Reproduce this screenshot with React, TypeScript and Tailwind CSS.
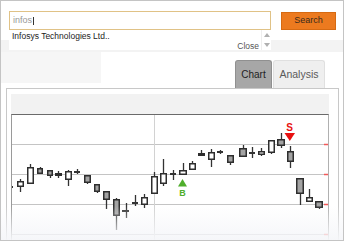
import React from "react";

// candle: x0, x1, bodyTop, bodyBottom, wickTop, wickBottom, kind
type Candle = [number, number, number, number, number, number, "w" | "g" | "d"];

const candles: Candle[] = [
  [7, 13, 186, 188, 181, 190, "d"],
  [17, 23, 181, 186, 179, 192, "w"],
  [27, 33, 167, 183, 164, 183, "w"],
  [37, 42, 168, 173, 167, 173, "g"],
  [47, 52, 170, 175, 170, 178, "g"],
  [55, 61, 173, 175, 171, 178, "g"],
  [65, 71, 171, 179, 170, 186, "w"],
  [74, 80, 171, 173, 169, 174, "d"],
  [84, 90, 175, 182, 175, 184, "g"],
  [94, 99, 184, 191, 184, 193, "g"],
  [103, 109, 191, 199, 191, 209, "g"],
  [113, 119, 199, 215, 198, 230, "g"],
  [122, 129, 210, 211, 203, 218, "d"],
  [132, 138, 202, 203, 195, 206, "d"],
  [141, 147, 197, 204, 194, 208, "w"],
  [151, 157, 176, 193, 172, 193, "w"],
  [160, 166, 173, 183, 159, 186, "w"],
  [170, 176, 173, 174, 170, 180, "d"],
  [179, 186, 170, 174, 163, 174, "w"],
  [189, 195, 163, 169, 161, 170, "w"],
  [198, 204, 153, 155, 150, 156, "g"],
  [208, 214, 152, 159, 149, 167, "w"],
  [217, 223, 151, 153, 150, 154, "d"],
  [227, 233, 155, 162, 155, 165, "g"],
  [239, 246, 148, 156, 145, 157, "g"],
  [249, 255, 152, 153, 147, 158, "d"],
  [258, 264, 151, 154, 148, 156, "w"],
  [268, 274, 140, 152, 140, 154, "w"],
  [277, 284, 139, 145, 133, 148, "g"],
  [287, 293, 151, 161, 146, 168, "g"],
  [296, 303, 178, 193, 178, 205, "g"],
  [306, 312, 197, 201, 189, 202, "w"],
  [315, 322, 201, 207, 201, 209, "g"],
];

const gridRows = [144, 174, 204, 234];

function CandleChart() {
  return (
    <svg width="316" height="126" className="block">
      <g transform="translate(-12,-115)">
        {gridRows.map((y) => (
          <line key={y} x1={12} x2={328} y1={y + 0.5} y2={y + 0.5} stroke="#c4c4c4" strokeWidth={1} />
        ))}
        <line x1={154.5} x2={154.5} y1={115} y2={241} stroke="#d2d2d2" strokeWidth={1} />
        {gridRows.map((y) => (
          <line key={"t" + y} x1={324} x2={328} y1={y + 0.5} y2={y + 0.5} stroke="#f25a5a" strokeWidth={1.5} />
        ))}
        {candles.map(([x0, x1, bt, bb, wt, wb, kind], i) => {
          const cx = Math.round((x0 + x1) / 2) + 0.5;
          const dark = kind === "d";
          return (
            <g key={i}>
              <line x1={cx} x2={cx} y1={wt} y2={wb} stroke="#333" strokeWidth={1.3} />
              {dark ? (
                <rect x={x0} y={bt} width={x1 - x0} height={Math.max(bb - bt, 2)} fill="#333" />
              ) : (
                <rect
                  x={x0 + 0.75}
                  y={bt + 0.75}
                  width={x1 - x0 - 0.5}
                  height={Math.max(bb - bt - 0.5, 1.5)}
                  fill={kind === "w" ? "#fff" : "#a3a3a3"}
                  stroke="#2e2e2e"
                  strokeWidth={1.5}
                />
              )}
            </g>
          );
        })}
        {/* buy marker */}
        <polygon points="178,186.5 187,186.5 182.5,179" fill="#4fae2c" />
        <text x={182.5} y={196} textAnchor="middle" fontSize="9" fontWeight="bold" fill="#4fae2c" fontFamily="Liberation Sans, sans-serif">
          B
        </text>
        {/* sell marker */}
        <text x={289.5} y={131} textAnchor="middle" fontSize="10" fontWeight="bold" fill="#e81010" fontFamily="Liberation Sans, sans-serif">
          S
        </text>
        <polygon points="284.5,133 295,133 289.8,141" fill="#e81010" />
      </g>
    </svg>
  );
}

function ScrollArrows() {
  return (
    <div className="flex flex-col items-center justify-between w-[10px] h-full py-[3px] border-l border-[#eee]">
      <svg width="6" height="4">
        <polygon points="0,4 6,4 3,0" fill="#b0b0b0" />
      </svg>
      <svg width="6" height="4">
        <polygon points="0,0 6,0 3,4" fill="#b0b0b0" />
      </svg>
    </div>
  );
}

export default function App() {
  return (
    <div className="relative w-[344px] h-[241px] overflow-hidden bg-white border border-[#c4c4c4] font-['Liberation_Sans',Arial,sans-serif] flex flex-col">
      {/* search row */}
      <div className="flex items-start pl-[8px] pt-[10px] h-[39px] shrink-0">
        <div className="w-[262px] h-[19px] border border-[#e0c286] flex items-center pl-[3px] text-[9px] text-[#999]">
          <span>infos</span>
          <span className="ml-[1px] w-px h-[8px] bg-[#333]" />
        </div>
        <button className="ml-[10px] mt-px w-[55px] h-[18px] bg-[#ec7a1f] border border-[#d66a12] text-[9px] text-[#3a2a1c] flex items-center justify-center">
          Search
        </button>
      </div>

      <div className="h-[12px] bg-[#f3f3f3] shrink-0" />

      {/* tabs row */}
      <div className="flex h-[36px] shrink-0">
        <div className="w-[100px] h-[31px] bg-[#f6f6f6]" />
        <div className="ml-auto mr-[18px] mt-[8px] flex items-end gap-px">
          <div className="w-[37px] h-[28px] bg-[#a7a7a7] border border-b-0 border-[#909090] rounded-t-[3px] flex items-center justify-center text-[10px] text-[#1e1e1e]">
            Chart
          </div>
          <div className="w-[52px] h-[28px] bg-[#efefef] border border-b-0 border-[#e0e0e0] rounded-t-[3px] flex items-center justify-center text-[10.5px] text-[#5a5a5a]">
            Analysis
          </div>
        </div>
      </div>

      {/* chart panel */}
      <div className="flex-1 ml-[5px] mr-[4px] border border-b-0 border-[#c8c8c8] pt-[5px] pl-[4px] pr-[9px] flex flex-col">
        <div className="h-[20px] bg-[#f2f2f2] shrink-0" />
        <div className="flex-1 border-t border-t-[#6a6a6a] border-l border-l-[#9a9a9a] border-r border-r-[#b0b0b0] overflow-hidden">
          <CandleChart />
        </div>
      </div>

      {/* suggestion dropdown */}
      <div className="absolute left-[8px] top-[29px] w-[262px] h-[20px] bg-white flex">
        <div className="flex-1 flex flex-col pl-[3px]">
          <span className="text-[8.5px] leading-[12px] text-[#1c1c1c]">Infosys Technologies Ltd..</span>
          <span className="self-end mr-[2px] text-[8.5px] leading-[9px] text-[#555]">Close</span>
        </div>
        <ScrollArrows />
      </div>

      {/* bottom fade */}
      <div className="absolute left-0 right-0 bottom-0 h-[34px] bg-linear-to-b from-white/0 to-[#f5f6f9]/95 pointer-events-none" />
    </div>
  );
}
